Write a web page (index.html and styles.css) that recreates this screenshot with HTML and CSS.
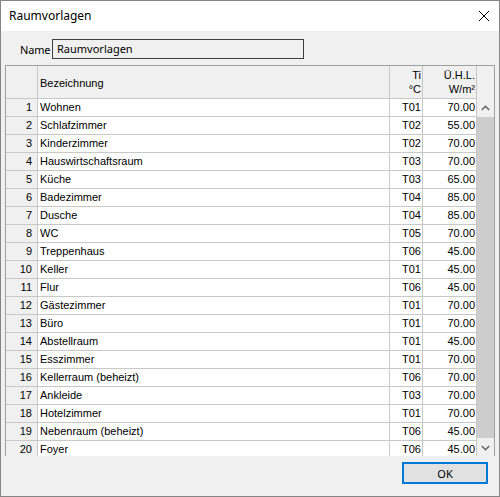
FILE: index.html
```html
<!DOCTYPE html>
<html lang="de">
<head>
<meta charset="utf-8">
<title>Raumvorlagen</title>
<link rel="stylesheet" href="styles.css">
</head>
<body>
<div class="window">
  <div class="titlebar">
    <span class="title">Raumvorlagen</span>
    <svg class="close" width="12" height="12" viewBox="0 0 12 12"><path d="M1 1 L11 11 M11 1 L1 11" stroke="#000" stroke-width="1" fill="none"/></svg>
  </div>
  <div class="content">
    <div class="namerow">
      <span class="label">Name</span>
      <div class="field">Raumvorlagen</div>
    </div>
    <div class="grid">
      <div class="head">
        <div class="c rn"></div>
        <div class="c nm hname">Bezeichnung</div>
        <div class="c ti h2"><span>Ti</span><span>°C</span></div>
        <div class="c uh h2"><span>Ü.H.L.</span><span>W/m²</span></div>
        <div class="corner"></div>
      </div>
      <div class="body">
        <div class="rows">
          <div class="row"><div class="c rn">1</div><div class="c nm">Wohnen</div><div class="c ti">T01</div><div class="c uh">70.00</div></div>
          <div class="row"><div class="c rn">2</div><div class="c nm">Schlafzimmer</div><div class="c ti">T02</div><div class="c uh">55.00</div></div>
          <div class="row"><div class="c rn">3</div><div class="c nm">Kinderzimmer</div><div class="c ti">T02</div><div class="c uh">70.00</div></div>
          <div class="row"><div class="c rn">4</div><div class="c nm">Hauswirtschaftsraum</div><div class="c ti">T03</div><div class="c uh">70.00</div></div>
          <div class="row"><div class="c rn">5</div><div class="c nm">Küche</div><div class="c ti">T03</div><div class="c uh">65.00</div></div>
          <div class="row"><div class="c rn">6</div><div class="c nm">Badezimmer</div><div class="c ti">T04</div><div class="c uh">85.00</div></div>
          <div class="row"><div class="c rn">7</div><div class="c nm">Dusche</div><div class="c ti">T04</div><div class="c uh">85.00</div></div>
          <div class="row"><div class="c rn">8</div><div class="c nm">WC</div><div class="c ti">T05</div><div class="c uh">70.00</div></div>
          <div class="row"><div class="c rn">9</div><div class="c nm">Treppenhaus</div><div class="c ti">T06</div><div class="c uh">45.00</div></div>
          <div class="row"><div class="c rn">10</div><div class="c nm">Keller</div><div class="c ti">T01</div><div class="c uh">45.00</div></div>
          <div class="row"><div class="c rn">11</div><div class="c nm">Flur</div><div class="c ti">T06</div><div class="c uh">45.00</div></div>
          <div class="row"><div class="c rn">12</div><div class="c nm">Gästezimmer</div><div class="c ti">T01</div><div class="c uh">70.00</div></div>
          <div class="row"><div class="c rn">13</div><div class="c nm">Büro</div><div class="c ti">T01</div><div class="c uh">70.00</div></div>
          <div class="row"><div class="c rn">14</div><div class="c nm">Abstellraum</div><div class="c ti">T01</div><div class="c uh">45.00</div></div>
          <div class="row"><div class="c rn">15</div><div class="c nm">Esszimmer</div><div class="c ti">T01</div><div class="c uh">70.00</div></div>
          <div class="row"><div class="c rn">16</div><div class="c nm">Kellerraum (beheizt)</div><div class="c ti">T06</div><div class="c uh">70.00</div></div>
          <div class="row"><div class="c rn">17</div><div class="c nm">Ankleide</div><div class="c ti">T03</div><div class="c uh">70.00</div></div>
          <div class="row"><div class="c rn">18</div><div class="c nm">Hotelzimmer</div><div class="c ti">T01</div><div class="c uh">70.00</div></div>
          <div class="row"><div class="c rn">19</div><div class="c nm">Nebenraum (beheizt)</div><div class="c ti">T06</div><div class="c uh">45.00</div></div>
          <div class="row"><div class="c rn">20</div><div class="c nm">Foyer</div><div class="c ti">T06</div><div class="c uh">45.00</div></div>
        </div>
        <div class="scroll">
          <div class="sbtn"><svg width="9" height="6" viewBox="0 0 9 6"><path d="M0.8 5 L4.5 1.3 L8.2 5" stroke="#606060" stroke-width="1.4" fill="none"/></svg></div>
          <div class="thumb"></div>
          <div class="sbtn"><svg width="9" height="6" viewBox="0 0 9 6"><path d="M0.8 1 L4.5 4.7 L8.2 1" stroke="#606060" stroke-width="1.4" fill="none"/></svg></div>
        </div>
      </div>
    </div>
    <div class="footer">
      <button class="ok">OK</button>
    </div>
  </div>
</div>
</body>
</html>
```

FILE: styles.css
```css
* { box-sizing: border-box; }
html, body { margin: 0; padding: 0; }
body { width: 500px; height: 497px; background: #f0f0f0; }

.window {
  width: 500px;
  height: 497px;
  border: 1px solid #858585;
  display: flex;
  flex-direction: column;
  background: #f0f0f0;
}

.titlebar {
  height: 30px;
  background: #ffffff;
  display: flex;
  align-items: center;
  justify-content: space-between;
  padding: 0 8px 0 8px;
  flex: none;
}
.title {
  font-family: "Noto Sans", sans-serif;
  font-size: 12px;
  color: #000;
  margin-top: -1px;
}
.close { margin-right: 1px; margin-top: -1px; }

.content {
  flex: 1;
  display: flex;
  flex-direction: column;
  padding: 8px 4px 0 4px;
}

.namerow {
  display: flex;
  align-items: center;
  height: 20px;
  padding-left: 15px;
  font-family: "Noto Sans", sans-serif;
  font-size: 11px;
  color: #000;
}
.label { width: 32px; letter-spacing: -0.2px; }
.field {
  width: 252px;
  height: 20px;
  border: 1px solid #3f3f3f;
  background: #f0f0f0;
  padding-left: 4px;
  line-height: 17px;
}

.grid {
  margin-top: 6px;
  width: 490px;
  height: 391px;
  border: 1px solid #a0a0a0;
  border-bottom: none;
  background: #ffffff;
  display: flex;
  flex-direction: column;
  overflow: hidden;
  font-family: "Liberation Sans", Arial, sans-serif;
  font-size: 11px;
  color: #000;
}

.head {
  display: grid;
  grid-template-columns: 32px 352px 33px 54px 17px;
  height: 33px;
  flex: none;
  background: #f0f0f0;
}
.head .c {
  border-right: 1px solid #c8c8c8;
  border-bottom: 1px solid #c8c8c8;
  background: #f0f0f0;
}
.hname {
  display: flex;
  align-items: center;
  padding-left: 2px;
  padding-top: 2px;
}
.h2 {
  display: flex;
  flex-direction: column;
  align-items: flex-end;
  justify-content: center;
  padding-right: 1px;
  line-height: 14px;
  padding-top: 0;
}
.corner { background: #f0f0f0; }

.body {
  flex: 1;
  display: flex;
  min-height: 0;
}
.rows {
  width: 471px;
  overflow: hidden;
}
.row {
  display: grid;
  grid-template-columns: 32px 352px 33px 54px;
  height: 18px;
}
.row .c {
  border-right: 1px solid #c8c8c8;
  border-bottom: 1px solid #c8c8c8;
  line-height: 17px;
  white-space: nowrap;
  overflow: hidden;
}
.rn {
  background: #f0f0f0;
  text-align: right;
  padding-right: 5px;
}
.row .nm { padding-left: 2px; }
.row .ti, .row .uh { text-align: right; padding-right: 1px; }

.scroll {
  width: 17px;
  display: flex;
  flex-direction: column;
  background: #f0f0f0;
}
.sbtn {
  height: 17px;
  flex: none;
  display: flex;
  align-items: center;
  justify-content: center;
  background: #f0f0f0;
}
.thumb {
  flex: 1;
  background: #cdcdcd;
  margin: 1px 0 1px 0;
}

.footer {
  display: flex;
  justify-content: flex-end;
  padding-top: 6px;
  padding-right: 7px;
}
.ok {
  width: 86px;
  height: 22px;
  border: 2px solid #0078d7;
  background: #e1e1e1;
  font-family: "Noto Sans", sans-serif;
  font-size: 11px;
  color: #000;
  padding: 0;
  margin: 0;
}
```
